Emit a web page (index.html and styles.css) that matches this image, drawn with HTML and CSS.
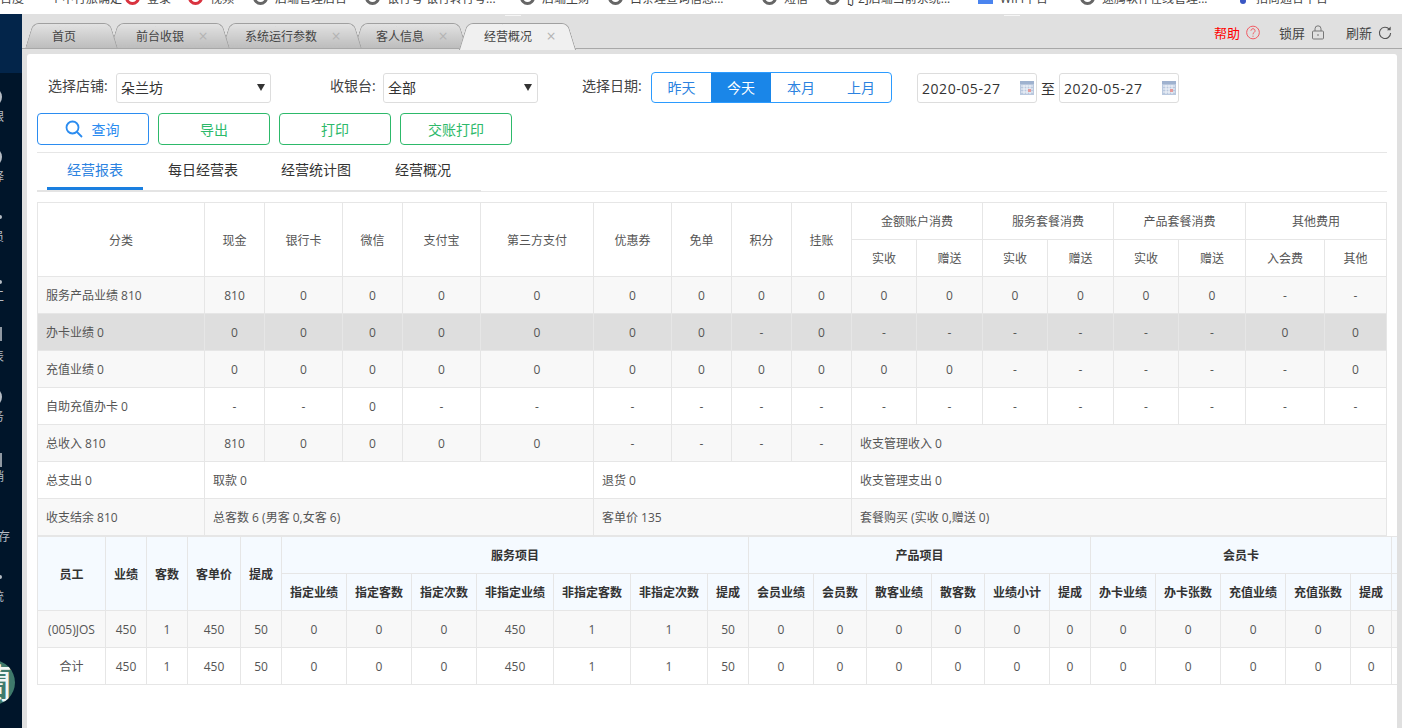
FILE: index.html
```html
<!DOCTYPE html>
<html lang="zh-CN">
<head>
<meta charset="utf-8">
<title>经营概况</title>
<link rel="stylesheet" href="styles.css">
</head>
<body>
<div class="bookmarks">
  <span class="bm bm-a"><span class="bm-text">百度</span></span>
  <span class="bm bm-b"><span class="bm-text">一个中行旅确定</span></span>
  <span class="bm bm-c"><i class="dot red"></i><span class="bm-text">登录</span></span>
  <span class="bm bm-d"><i class="dot red"></i><span class="bm-text">视频</span></span>
  <span class="bm bm-e"><i class="dot"></i><span class="bm-text">后端管理后台</span></span>
  <span class="bm bm-f"><i class="dot"></i><span class="bm-text">银行号 银行转行号...</span></span>
  <span class="bm bm-g"><i class="dot"></i><span class="bm-text">后端主财</span></span>
  <span class="bm bm-h"><i class="dot"></i><span class="bm-text">白条理查询信息...</span></span>
  <span class="bm bm-i"><i class="dot"></i><span class="bm-text">短信</span></span>
  <span class="bm bm-j"><i class="dot"></i><span class="bm-text">[J-2]后端当前系统...</span></span>
  <span class="bm bm-k"><i class="square"></i><span class="bm-text">WIFI平台</span></span>
  <span class="bm bm-l"><i class="dot"></i><span class="bm-text">速腾软件在线管理...</span></span>
  <span class="bm bm-m"><i class="pin"></i><span class="bm-text">招商通合平台</span></span>
</div>
<div class="app">
  <nav class="sidebar">
    <div class="side-top"></div>
    <div class="side-item"><i class="si si-round"></i><span>收银</span></div>
    <div class="side-item"><i class="si si-round"></i><span>预择</span></div>
    <div class="side-item"><i class="si si-dot"></i><span>会员</span></div>
    <div class="side-item"><i class="si si-dot si-low"></i><span>员工</span></div>
    <div class="side-item"><i class="si si-bar"></i><span>报表</span></div>
    <div class="side-item"><i class="si si-round"></i><span>财务</span></div>
    <div class="side-item"><i class="si si-bar si-bar-low"></i><span>营销</span></div>
    <div class="side-item"><i class="si"></i><span>进销存</span></div>
    <div class="side-item"><i class="si si-dot"></i><span>系统</span></div>
    <div class="logo">蘭</div>
  </nav>
  <main class="content">
    <header class="tabbar">
      <i class="tick tick-a"></i><i class="tick tick-b"></i>
      <div class="tab t1"><span>首页</span></div>
      <div class="tab t2"><span>前台收银</span><b>×</b></div>
      <div class="tab t3"><span>系统运行参数</span><b>×</b></div>
      <div class="tab t4"><span>客人信息</span><b>×</b></div>
      <div class="tab t5 active"><span>经营概况</span><b>×</b></div>
      <div class="tools">
        <span class="tool help">帮助
          <svg class="ico" viewBox="0 0 15 15"><circle cx="7.5" cy="7.5" r="6.8" fill="none" stroke="#f2525a"/><path d="M5.3 5.6a2.2 2.2 0 1 1 3.4 1.9c-.8.5-1.2 1-1.2 2M7.5 10.9v1.2" fill="none" stroke="#f2525a"/></svg>
        </span>
        <span class="tool">锁屏
          <svg class="ico" viewBox="0 0 14 15"><rect x="1.5" y="6" width="11" height="8" rx="1" fill="none" stroke="#777"/><path d="M4 6V3.8a3 3 0 0 1 6 0V6M7 9v2" fill="none" stroke="#777"/></svg>
        </span>
        <span class="tool">刷新
          <svg class="ico" viewBox="0 0 15 15"><path d="M12.2 4.2A6 6 0 1 0 13.5 8" fill="none" stroke="#555" stroke-width="1.2"/><path d="M13.6 1.2v4h-4z" fill="#555"/></svg>
        </span>
      </div>
    </header>
    <section class="card">
      <div class="filters">
        <label class="lbl">选择店铺:</label>
        <div class="select">朵兰坊<i></i></div>
        <label class="lbl lbl-cash">收银台:</label>
        <div class="select">全部<i></i></div>
        <label class="lbl lbl-date">选择日期:</label>
        <div class="range">
          <span>昨天</span><span class="on">今天</span><span>本月</span><span>上月</span>
        </div>
        <div class="date date-first">2020-05-27
          <svg class="cal" viewBox="0 0 14 14"><rect width="14" height="14" fill="#b9c8de"/><rect y="0" width="14" height="3" fill="#9fb2cf"/><path d="M1 5h12M1 8h12M1 11h12M4 4v9M7 4v9M10 4v9" stroke="#f2f5fa"/><rect x="8" y="8" width="3" height="3" fill="#e59a9a"/></svg>
        </div>
        <span class="to">至</span>
        <div class="date">2020-05-27
          <svg class="cal" viewBox="0 0 14 14"><rect width="14" height="14" fill="#b9c8de"/><rect y="0" width="14" height="3" fill="#9fb2cf"/><path d="M1 5h12M1 8h12M1 11h12M4 4v9M7 4v9M10 4v9" stroke="#f2f5fa"/><rect x="8" y="8" width="3" height="3" fill="#e59a9a"/></svg>
        </div>
      </div>
      <div class="actions">
        <button class="btn btn-blue"><svg class="search" viewBox="0 0 18 18"><circle cx="7.5" cy="7.5" r="6" fill="none" stroke="#2b8cf0" stroke-width="1.8"/><path d="M12 12l5 5" stroke="#2b8cf0" stroke-width="1.8"/></svg>查询</button>
        <button class="btn btn-green">导出</button>
        <button class="btn btn-green">打印</button>
        <button class="btn btn-green">交账打印</button>
      </div>
      <div class="subtabs">
        <div class="subtab-list">
          <span class="subtab s1 on">经营报表</span>
          <span class="subtab s2">每日经营表</span>
          <span class="subtab s3">经营统计图</span>
          <span class="subtab s4">经营概况</span>
        </div>
      </div>
      <table class="grid report">
        <colgroup>
          <col class="w167"><col class="w60"><col class="w78"><col class="w60"><col class="w78"><col class="w113"><col class="w78"><col class="w60"><col class="w60"><col class="w60">
          <col class="w65"><col class="w66"><col class="w65"><col class="w66"><col class="w65"><col class="w67"><col class="w79"><col class="w62">
        </colgroup>
        <thead>
          <tr><th rowspan="2">分类</th><th rowspan="2">现金</th><th rowspan="2">银行卡</th><th rowspan="2">微信</th><th rowspan="2">支付宝</th><th rowspan="2">第三方支付</th><th rowspan="2">优惠券</th><th rowspan="2">免单</th><th rowspan="2">积分</th><th rowspan="2">挂账</th><th colspan="2">金额账户消费</th><th colspan="2">服务套餐消费</th><th colspan="2">产品套餐消费</th><th colspan="2">其他费用</th></tr>
          <tr><th>实收</th><th>赠送</th><th>实收</th><th>赠送</th><th>实收</th><th>赠送</th><th>入会费</th><th>其他</th></tr>
        </thead>
        <tbody>
          <tr class="alt"><td class="left">服务产品业绩 810</td><td>810</td><td>0</td><td>0</td><td>0</td><td>0</td><td>0</td><td>0</td><td>0</td><td>0</td><td>0</td><td>0</td><td>0</td><td>0</td><td>0</td><td>0</td><td>-</td><td>-</td></tr>
          <tr class="hover"><td class="left">办卡业绩 0</td><td>0</td><td>0</td><td>0</td><td>0</td><td>0</td><td>0</td><td>0</td><td>-</td><td>0</td><td>-</td><td>-</td><td>-</td><td>-</td><td>-</td><td>-</td><td>0</td><td>0</td></tr>
          <tr class="alt"><td class="left">充值业绩 0</td><td>0</td><td>0</td><td>0</td><td>0</td><td>0</td><td>0</td><td>0</td><td>0</td><td>0</td><td>0</td><td>0</td><td>-</td><td>-</td><td>-</td><td>-</td><td>-</td><td>0</td></tr>
          <tr><td class="left">自助充值办卡 0</td><td>-</td><td>-</td><td>0</td><td>-</td><td>-</td><td>-</td><td>-</td><td>-</td><td>-</td><td>-</td><td>-</td><td>-</td><td>-</td><td>-</td><td>-</td><td>-</td><td>-</td></tr>
          <tr class="alt"><td class="left">总收入 810</td><td>810</td><td>0</td><td>0</td><td>0</td><td>0</td><td>-</td><td>-</td><td>-</td><td>-</td><td class="left" colspan="8">收支管理收入 0</td></tr>
          <tr><td class="left">总支出 0</td><td class="left" colspan="5">取款 0</td><td class="left" colspan="4">退货 0</td><td class="left" colspan="8">收支管理支出 0</td></tr>
          <tr class="alt"><td class="left">收支结余 810</td><td class="left" colspan="5">总客数 6 (男客 0,女客 6)</td><td class="left" colspan="4">客单价 135</td><td class="left" colspan="8">套餐购买 (实收 0,赠送 0)</td></tr>
        </tbody>
      </table>
      <div class="staff-wrap">
        <table class="grid staff">
          <colgroup>
            <col class="w68"><col class="w41"><col class="w41"><col class="w53"><col class="w41">
            <col class="w65"><col class="w65"><col class="w65"><col class="w77"><col class="w77"><col class="w77"><col class="w41">
            <col class="w65"><col class="w53"><col class="w65"><col class="w53"><col class="w65"><col class="w41">
            <col class="w65"><col class="w65"><col class="w65"><col class="w65"><col class="w41"><col class="w41">
          </colgroup>
          <thead>
            <tr><th rowspan="2">员工</th><th rowspan="2">业绩</th><th rowspan="2">客数</th><th rowspan="2">客单价</th><th rowspan="2">提成</th><th colspan="7">服务项目</th><th colspan="6">产品项目</th><th colspan="5">会员卡</th><th></th></tr>
            <tr><th>指定业绩</th><th>指定客数</th><th>指定次数</th><th>非指定业绩</th><th>非指定客数</th><th>非指定次数</th><th>提成</th><th>会员业绩</th><th>会员数</th><th>散客业绩</th><th>散客数</th><th>业绩小计</th><th>提成</th><th>办卡业绩</th><th>办卡张数</th><th>充值业绩</th><th>充值张数</th><th>提成</th><th></th></tr>
          </thead>
          <tbody>
            <tr class="alt"><td>(005)JOS</td><td>450</td><td>1</td><td>450</td><td>50</td><td>0</td><td>0</td><td>0</td><td>450</td><td>1</td><td>1</td><td>50</td><td>0</td><td>0</td><td>0</td><td>0</td><td>0</td><td>0</td><td>0</td><td>0</td><td>0</td><td>0</td><td>0</td><td></td></tr>
            <tr><td>合计</td><td>450</td><td>1</td><td>450</td><td>50</td><td>0</td><td>0</td><td>0</td><td>450</td><td>1</td><td>1</td><td>50</td><td>0</td><td>0</td><td>0</td><td>0</td><td>0</td><td>0</td><td>0</td><td>0</td><td>0</td><td>0</td><td>0</td><td></td></tr>
          </tbody>
        </table>
      </div>
    </section>
  </main>
</div>
</body>
</html>
```
FILE: styles.css
```css
* { box-sizing: border-box; }
html, body { margin: 0; height: 728px; overflow: hidden; }
body {
  width: 1402px;
  font-family: "Open Sans", "Noto Sans CJK SC", sans-serif;
  font-size: 12px;
  color: #555;
  background: #e0e0e0;
  display: flex;
  flex-direction: column;
}

/* browser bookmarks, cut off at the top edge */
.bookmarks {
  height: 14px;
  flex: none;
  background: #fff;
  display: flex;
  align-items: flex-end;
  overflow: hidden;
  position: relative;
  color: #444;
  font-size: 12px;
}
.bm { display: flex; align-items: center; gap: 7px; height: 14px; white-space: nowrap; flex: none; }
.bm-text { position: relative; top: -9px; }
.bm i { flex: none; position: relative; top: -10px; }
.dot { width: 15px; height: 15px; border-radius: 50%; border: 3px solid #666; display: block; }
.dot.red { border-color: #d9333f; }
.square { width: 15px; height: 14px; background: #4a84ef; display: block; }
.pin { width: 6px; height: 6px; margin: 0 3px; background: #3a57c4; border-radius: 50%; display: block; top: -6px !important; }
.bm-a { width: 38px; }
.bm-b { width: 87px; }
.bm-c { width: 63px; }
.bm-d { width: 65px; }
.bm-e { width: 112px; }
.bm-f { width: 155px; }
.bm-g { width: 88px; }
.bm-h { width: 154px; }
.bm-i { width: 63px; }
.bm-j { width: 153px; }
.bm-k { width: 102px; }
.bm-l { width: 157px; }
.bm-m { width: 160px; }

.app { flex: 1; display: flex; min-height: 0; }

/* sidebar, almost entirely scrolled out of view */
.sidebar {
  width: 22px;
  flex: none;
  background: #00152a;
  overflow: hidden;
  color: #b5bcc4;
}
.side-top { height: 59px; background: #03254a; margin-bottom: 14px; }
.side-item {
  width: 48px;
  height: 60px;
  margin-left: -32px;
  display: flex;
  flex-direction: column;
  align-items: center;
  justify-content: flex-start;
  line-height: 16px;
  white-space: nowrap;
}
.si { display: block; width: 20px; height: 20px; margin-bottom: 2px; flex: none; }
.si-round { background: #b5bcc4; border-radius: 50%; }
.si-dot { height: 4px; margin: 8px 0 10px; background: #b5bcc4; border-radius: 2px; }
.si-low { margin: 13px 0 5px; }
.si-bar { height: 14px; margin: 0 0 8px; background: #8f98a2; }
.si-bar-low { margin: 6px 0 2px; }
.logo {
  width: 45px;
  height: 45px;
  margin: 33px 0 0 -30px;
  border-radius: 50%;
  background: #3f7a6b;
  color: #f2f6f4;
  font-size: 40px;
  line-height: 45px;
  text-align: center;
  overflow: hidden;
}

.content { flex: 1; min-width: 0; display: flex; flex-direction: column; }

/* tab strip */
.tabbar {
  height: 35px;
  flex: none;
  padding: 9px 5px 0 7px;
  display: flex;
  align-items: stretch;
  border-bottom: 1px solid #a8a8a8;
  background: #e0e0e0;
  position: relative;
  color: #444;
}
.tick { position: absolute; top: 1px; height: 1px; width: 16px; background: #f6f6f6; }
.tick-a { left: 483px; }
.tick-b { left: 982px; }
.tab {
  position: relative;
  display: flex;
  align-items: center;
  line-height: 25px;
  padding-top: 1px;
  white-space: nowrap;
  isolation: isolate;
}
.tab::before, .tab::after {
  content: "";
  position: absolute;
  top: 0;
  bottom: 0;
  width: 60%;
  z-index: -1;
  background: linear-gradient(#e2e2e2, #bdbdbd);
  border-top: 1px solid #a0a0a0;
}
.tab::before {
  left: 0;
  transform: skewX(-17deg);
  border-left: 1px solid #a0a0a0;
  border-top-left-radius: 6px;
}
.tab::after {
  right: 0;
  transform: skewX(17deg);
  border-right: 1px solid #a0a0a0;
  border-top-right-radius: 6px;
}
.tab b { font-weight: 400; font-size: 16px; color: #b4b4b4; margin-left: 14px; width: 10px; text-align: center; }
.t1 { padding-left: 23px; padding-right: 38px; z-index: 5; }
.t2 { padding-left: 22px; padding-right: 18px; z-index: 4; }
.t3 { padding-left: 19px; padding-right: 17px; z-index: 3; }
.t4 { padding-left: 18px; padding-right: 15px; z-index: 2; }
.t5 { padding-left: 21px; padding-right: 16px; z-index: 6; }
.active::before, .active::after { background: #f0f0f0; height: 26px; }
.tools { margin-left: auto; display: flex; gap: 21px; align-items: center; height: 20px; margin-top: -1px; font-size: 13px; padding-right: 5px; }
.tool { display: flex; align-items: center; gap: 6px; }
.help { color: #f00; margin-right: -2px; }
.ico { width: 14px; height: 15px; }

/* white card */
.card {
  flex: 1;
  margin: 5px 5px 0 5px;
  padding: 18px 0 0 10px;
  background: #fff;
  border-radius: 3px 3px 0 0;
  min-height: 0;
  overflow: hidden;
}

.filters { display: flex; align-items: center; height: 31px; font-size: 14px; padding-left: 11px; color: #444; }
.lbl { width: 59px; white-space: nowrap; position: relative; top: -3px; }
.select {
  width: 155px;
  height: 30px;
  margin: 1px 0 0 9px;
  padding: 0 0 2px 4px;
  border: 1px solid #ddd;
  border-radius: 3px;
  display: flex;
  align-items: center;
  justify-content: space-between;
  color: #333;
}
.select i {
  width: 0;
  height: 0;
  margin-right: 5px;
  border: 4px solid transparent;
  border-top: 7px solid #333;
  border-bottom: 0;
}
.lbl-cash { margin-left: 59px; width: 45px; }
.lbl-cash + .select { margin-left: 8px; }
.lbl-date { margin-left: 44px; }
.range {
  margin-left: 10px;
  width: 241px;
  height: 31px;
  display: flex;
  border: 1px solid #2b9bff;
  border-radius: 4px;
  overflow: hidden;
  color: #2b82e0;
}
.range span { flex: 1; text-align: center; line-height: 29px; }
.range span:first-child { flex: none; width: 59px; }
.range .on { background: #1a86e8; color: #fff; }
.date {
  width: 120px;
  height: 30px;
  margin-top: 1px;
  padding: 0 2px 0 4px;
  border: 1px solid #ddd;
  border-radius: 3px;
  display: flex;
  align-items: center;
  justify-content: space-between;
  letter-spacing: .55px;
  color: #333;
}
.date-first { margin-left: 25px; }
.to { width: 22px; text-align: center; color: #333; }
.cal { width: 14px; height: 14px; }

.actions { display: flex; gap: 9px; margin-top: 10px; }
.btn {
  width: 112px;
  height: 32px;
  padding: 0;
  border-radius: 4px;
  background: #fff;
  font: inherit;
  font-size: 14px;
  display: flex;
  align-items: center;
  justify-content: center;
}
.btn-blue { border: 1px solid #2b8cf0; color: #2b8cf0; }
.btn-green { border: 1px solid #2db96a; color: #2db96a; }
.search { width: 18px; height: 18px; margin: 0 9px 0 -2px; }

.subtabs {
  width: 1350px;
  margin-top: 7px;
  border-top: 1px solid #e6e6e6;
  border-bottom: 1px solid #e8e8e8;
  box-sizing: content-box;
  height: 38px;
}
.subtab-list {
  width: 444px;
  height: 39px;
  display: flex;
  font-size: 14px;
  color: #333;
  border-bottom: 2px solid #e4e4e4;
  position: relative;
}
.subtab { line-height: 34px; height: 37px; white-space: nowrap; }
.s1 { margin-left: 30px; }
.s2 { margin-left: 45px; }
.s3 { margin-left: 43px; }
.s4 { margin-left: 44px; }
.subtab.on { color: #2b82e0; position: relative; }
.subtab.on::after {
  content: "";
  position: absolute;
  left: -20px;
  right: -20px;
  bottom: 0;
  height: 3px;
  background: #1a7fe0;
}

/* data tables */
.grid {
  border-collapse: collapse;
  table-layout: fixed;
  font-size: 12px;
  color: #555;
}
.grid th, .grid td {
  height: 37px;
  padding: 0;
  border: 1px solid #e6e6e6;
  text-align: center;
  font-weight: 400;
  white-space: nowrap;
  overflow: hidden;
}
.grid .left { text-align: left; padding-left: 8px; }
.alt td { background: #f8f8f8; }
.hover td { background: #dedede; }
.report { width: 1349px; margin-top: 10px; }
.staff-wrap { overflow: hidden; width: 1360px; }
.staff { width: 1394px; }
.staff th { background: #f5faff; color: #333; font-weight: 700; }

.w41 { width: 41px; }
.w53 { width: 53px; }
.w60 { width: 60px; }
.w62 { width: 62px; }
.w65 { width: 65px; }
.w66 { width: 66px; }
.w67 { width: 67px; }
.w68 { width: 68px; }
.w77 { width: 77px; }
.w78 { width: 78px; }
.w79 { width: 79px; }
.w113 { width: 113px; }
.w167 { width: 167px; }
```
